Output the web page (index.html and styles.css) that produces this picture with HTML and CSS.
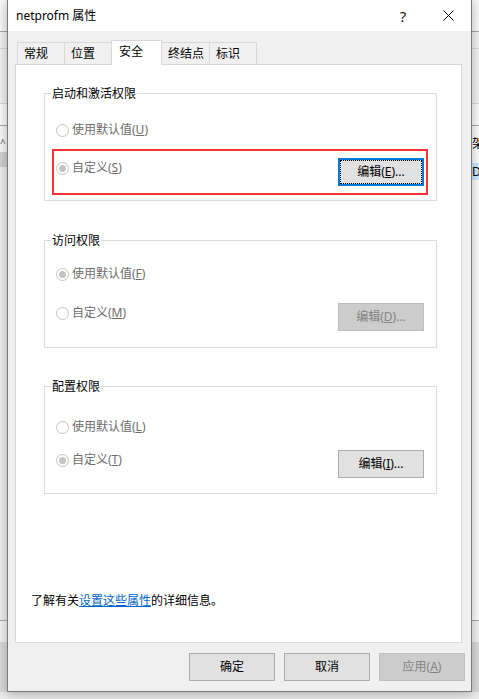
FILE: index.html
```html
<!DOCTYPE html>
<html lang="zh-CN">
<head>
<meta charset="utf-8">
<title>netprofm 属性</title>
<link rel="stylesheet" href="styles.css">
</head>
<body>
<div class="screen">
  <div class="main">
    <div class="bg bg-left">
      <div class="s-title"></div>
      <div class="ln-dk"></div>
      <div class="s-a"></div>
      <div class="ln-lt"></div>
      <div class="s-b"></div>
      <div class="ln-lt"></div>
      <div class="s-c"></div>
      <div class="ln-md"></div>
      <div class="s-d"><span class="chev">^</span></div>
      <div class="s-sel"></div>
      <div class="s-fill"></div>
      <div class="ln-md"></div>
      <div class="s-e"></div>
      <div class="s-f"></div>
    </div>

    <div class="dialog">
      <div class="titlebar">
        <span class="title">netprofm 属性</span>
        <span class="tb-help">?</span>
        <span class="tb-close">
          <svg width="11" height="11" viewBox="0 0 11 11"><path d="M0.5 0.5L10.5 10.5M10.5 0.5L0.5 10.5" stroke="#000" stroke-width="1" fill="none"/></svg>
        </span>
      </div>

      <div class="dlg-body">
        <div class="tabs">
          <div class="tab">常规</div>
          <div class="tab">位置</div>
          <div class="tab active">安全</div>
          <div class="tab">终结点</div>
          <div class="tab">标识</div>
        </div>

        <div class="panel">
          <div class="group g1">
            <div class="legend">启动和激活权限</div>
            <div class="opt row1"><span class="radio"></span><span>使用默认值(<u>U</u>)</span></div>
            <div class="row2">
              <div class="opt"><span class="radio on"></span><span>自定义(<u>S</u>)</span></div>
              <button class="btn focus">编辑(<u>E</u>)...</button>
            </div>
            <div class="hl"></div>
          </div>

          <div class="group g2">
            <div class="legend">访问权限</div>
            <div class="opt row1"><span class="radio on"></span><span>使用默认值(<u>F</u>)</span></div>
            <div class="row2">
              <div class="opt"><span class="radio"></span><span>自定义(<u>M</u>)</span></div>
              <button class="btn dis">编辑(<u>D</u>)...</button>
            </div>
          </div>

          <div class="group g3">
            <div class="legend">配置权限</div>
            <div class="opt row1"><span class="radio"></span><span>使用默认值(<u>L</u>)</span></div>
            <div class="row2">
              <div class="opt"><span class="radio on"></span><span>自定义(<u>T</u>)</span></div>
              <button class="btn">编辑(<u>I</u>)...</button>
            </div>
          </div>

          <div class="help">了解有关<a href="#">设置这些属性</a>的详细信息。</div>
        </div>

        <div class="actions">
          <button class="btn">确定</button>
          <button class="btn">取消</button>
          <button class="btn dis">应用(<u>A</u>)</button>
        </div>
      </div>
    </div>

    <div class="bg bg-right">
      <div class="s-title"></div>
      <div class="ln-dk"></div>
      <div class="s-a"></div>
      <div class="ln-lt"></div>
      <div class="s-b"></div>
      <div class="ln-lt"></div>
      <div class="s-c"></div>
      <div class="ln-md"></div>
      <div class="r-text">架</div>
      <div class="r-sel">D</div>
      <div class="s-fill white"></div>
      <div class="ln-md"></div>
      <div class="s-e"></div>
      <div class="s-f"></div>
    </div>
  </div>
  <div class="bg-bottom"></div>
</div>
</body>
</html>
```

FILE: styles.css
```css
* { box-sizing: border-box; }

html, body {
  margin: 0;
  padding: 0;
}

body {
  width: 479px;
  height: 699px;
  overflow: hidden;
  background: #e9e9e9;
  font-family: "Noto Sans", "Noto Sans CJK SC", sans-serif;
  font-size: 12px;
  line-height: 16px;
  color: #000;
}

.screen {
  display: flex;
  flex-direction: column;
  width: 479px;
  height: 699px;
}

.main {
  display: flex;
  height: 692px;
}

/* background application strips */
.bg {
  width: 7px;
  display: flex;
  flex-direction: column;
  overflow: hidden;
  background: #f0f0f0;
}
.s-title { height: 31px; background: #f7f7f7; }
.ln-dk { height: 1px; background: #a5a5a5; }
.ln-lt { height: 1px; background: #d6d6d6; }
.ln-md { height: 1px; background: #a8a8a8; }
.s-a { height: 16px; background: #f0f0f0; }
.s-b { height: 54px; background: #f0f0f0; }
.s-c { height: 21px; background: #fafafa; }
.s-d {
  height: 26px;
  background: #f7f7f7;
  display: flex;
  align-items: center;
  color: #555;
  font-size: 10px;
  padding-top: 8px;
}
.s-sel { height: 15px; background: #cfcfcf; }
.s-fill { flex: 1; background: #ececec; }
.s-fill.white { background: #fbfbfb; }
.s-e { height: 21px; background: #f0f0f0; }
.s-f { height: 50px; background: #d9d9d9; }
.r-text {
  height: 37px;
  background: #fbfbfb;
  line-height: 16px;
  padding-top: 10px;
  font-size: 12px;
  white-space: nowrap;
}
.r-sel {
  height: 17px;
  background: #cce8ff;
  line-height: 17px;
  font-size: 12px;
}

.bg-bottom {
  height: 7px;
  background: #ececec;
}

/* dialog */
.dialog {
  width: 465px;
  height: 692px;
  border: 1px solid #7a7a7a;
  border-top: 0;
  background: #f0f0f0;
  display: flex;
  flex-direction: column;
  position: relative;
  z-index: 1;
  box-shadow: 0 2px 10px rgba(0, 0, 0, 0.28);
}

.titlebar {
  height: 31px;
  flex: none;
  background: #fff;
  display: flex;
  align-items: center;
  padding-left: 8px;
}
.title {
  flex: 1;
  font-size: 12px;
  line-height: 16px;
  padding-top: 1px;
}
.tb-help {
  width: 44px;
  text-align: center;
  font-size: 15px;
  line-height: 16px;
  color: #222;
}
.tb-close {
  width: 46px;
  display: flex;
  justify-content: center;
  align-items: center;
}

.dlg-body {
  flex: 1;
  display: flex;
  flex-direction: column;
  padding: 9px 6px 10px 7px;
}

/* tabs */
.tabs {
  display: flex;
  align-items: flex-end;
  height: 24px;
  padding-left: 2px;
}
.tab {
  height: 22px;
  min-width: 48px;
  padding: 0 5px 0 6px;
  border: 1px solid #d9d9d9;
  border-bottom: 0;
  margin-left: -1px;
  background: #f0f0f0;
  line-height: 21px;
  white-space: nowrap;
}
.tab:first-child { margin-left: 0; }
.tab.active {
  height: 25px;
  width: 51px;
  margin-bottom: -1px;
  padding-left: 7px;
  background: #fff;
  position: relative;
  z-index: 1;
  line-height: 21px;
}

/* panel */
.panel {
  width: 447px;
  height: 579px;
  background: #fff;
  border: 1px solid #d9d9d9;
  display: flex;
  flex-direction: column;
}

.group {
  position: relative;
  width: 393px;
  height: 108px;
  border: 1px solid #dcdcdc;
  margin-left: 28px;
  display: flex;
  flex-direction: column;
  flex: none;
}
.g1 { margin-top: 28px; }
.g2 { margin-top: 39px; }
.g3 { margin-top: 38px; }

.legend {
  align-self: flex-start;
  margin: -8px 0 0 6px;
  padding: 0 1px;
  height: 16px;
  line-height: 16px;
  background: #fff;
  color: #000;
}

.opt {
  display: flex;
  align-items: center;
  height: 20px;
  padding-left: 11px;
  color: #6d6d6d;
  white-space: nowrap;
}
.radio {
  width: 13px;
  height: 13px;
  border: 1px solid #c4c4c4;
  border-radius: 50%;
  margin-right: 3px;
  background: #fff;
  display: flex;
  align-items: center;
  justify-content: center;
  flex: none;
}
.radio.on::after {
  content: "";
  width: 7px;
  height: 7px;
  border-radius: 50%;
  background: #c4c4c4;
}

.row2 {
  display: flex;
  justify-content: space-between;
  align-items: flex-start;
  padding-right: 12px;
}

.g1 .row1 { margin-top: 18px; }
.g1 .row2 { margin-top: 18px; }
.g2 .row1 { margin-top: 15px; }
.g2 .row2 { margin-top: 19px; }
.g3 .row1 { margin-top: 22px; }
.g3 .row2 { margin-top: 13px; }

.btn {
  width: 86px;
  height: 28px;
  margin: 0;
  padding: 0;
  background: #e1e1e1;
  border: 1px solid #adadad;
  font: inherit;
  color: #000;
  display: flex;
  align-items: center;
  justify-content: center;
  white-space: nowrap;
}
.btn.focus {
  border: 2px solid #0078d7;
  outline: 1px dotted #000;
  outline-offset: -3px;
}
.btn.dis {
  background: #cccccc;
  border-color: #bfbfbf;
  color: #838383;
}

.hl {
  position: absolute;
  left: 7px;
  top: 55px;
  width: 376px;
  height: 46px;
  border: 2px solid #ff3333;
  pointer-events: none;
}

.help {
  margin-top: auto;
  margin-bottom: 33px;
  margin-left: 15px;
  line-height: 16px;
}
.help a {
  color: #0066cc;
  text-decoration: underline;
}

.actions {
  display: flex;
  justify-content: flex-end;
  gap: 9px;
  margin-top: 10px;
}
```
